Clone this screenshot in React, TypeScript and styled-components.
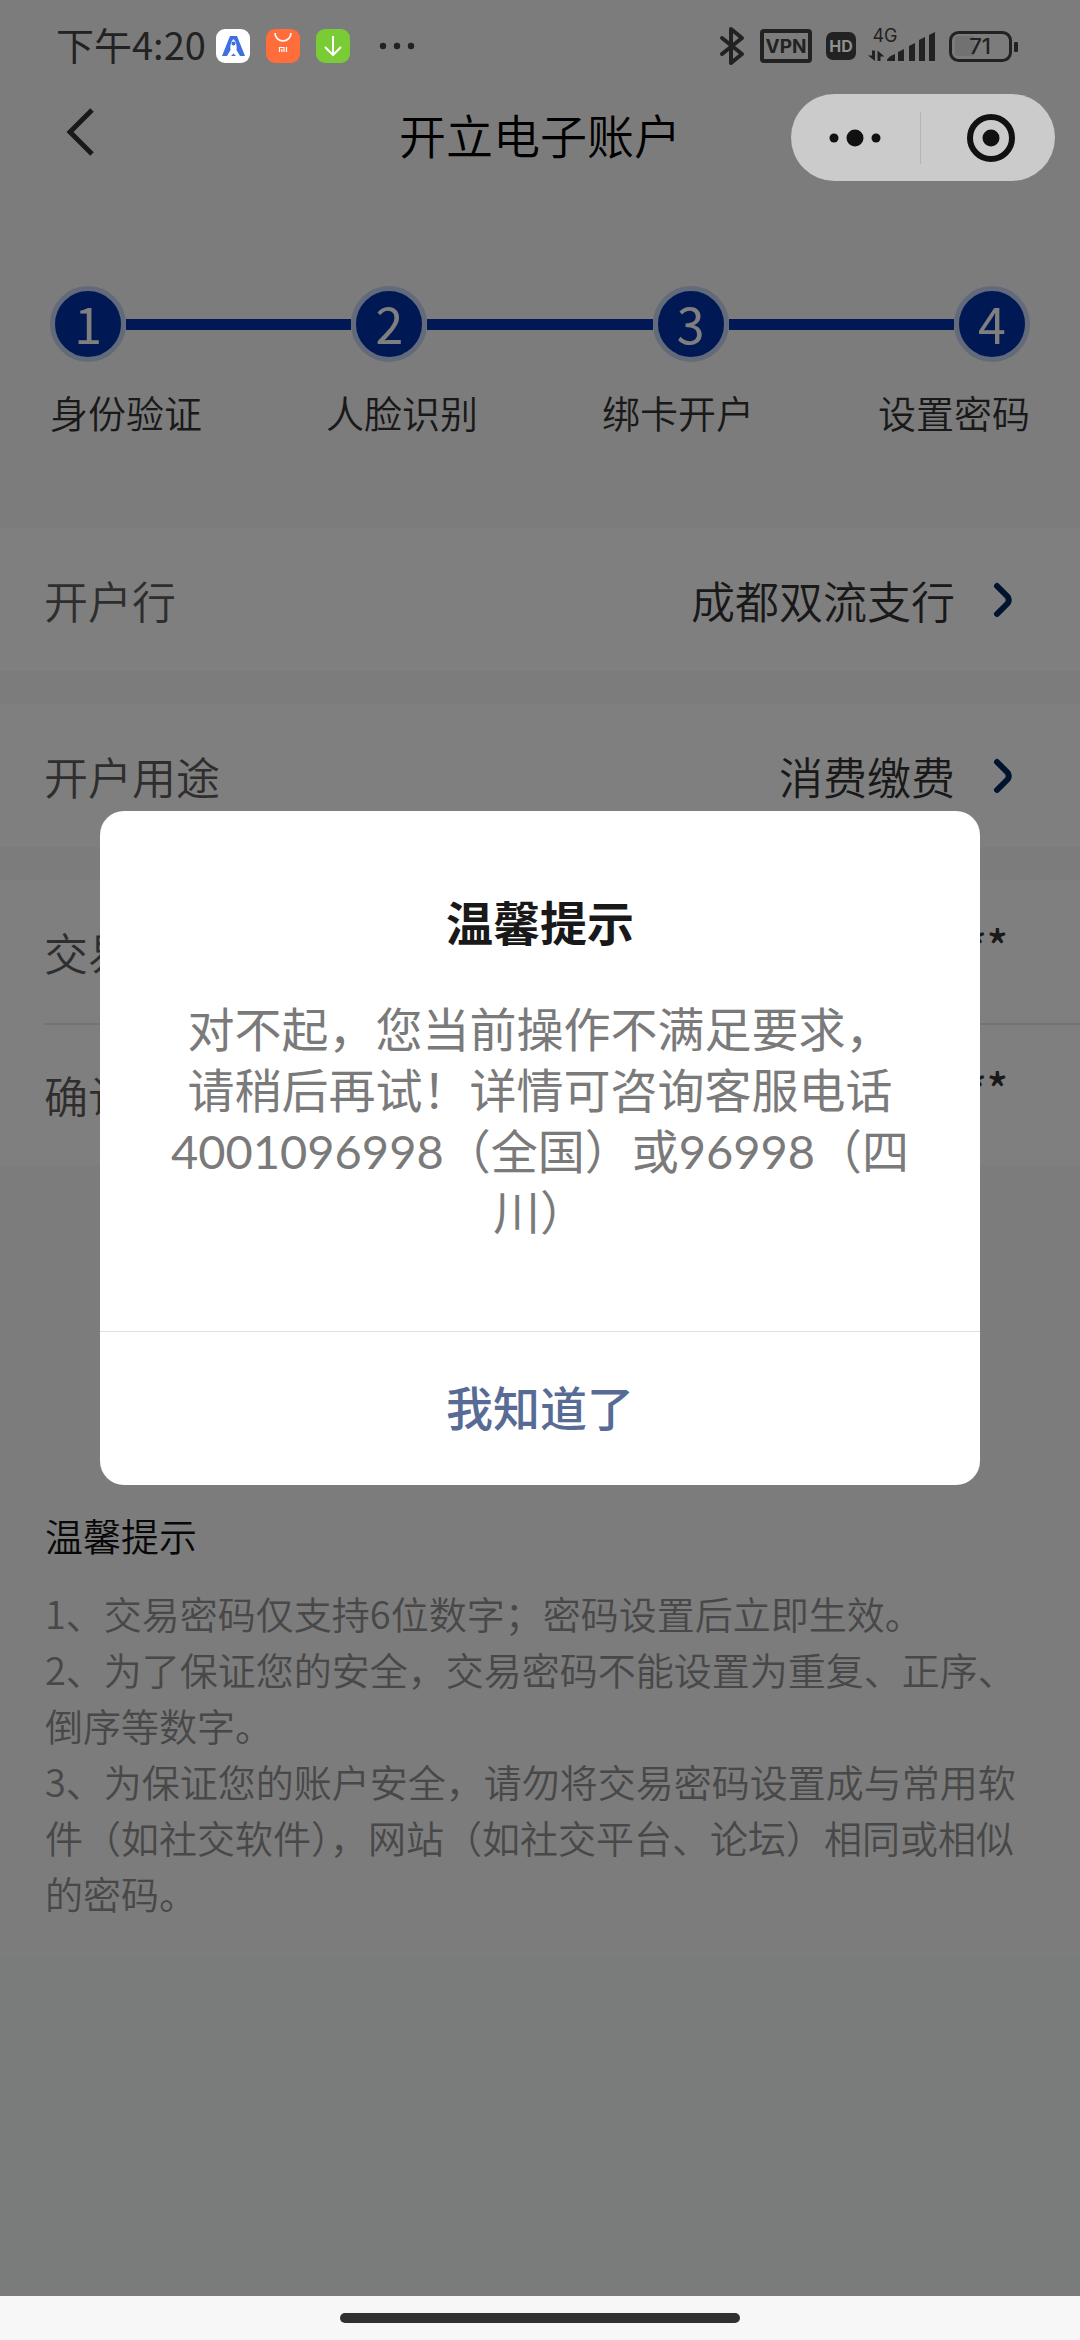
import React from "react";
import styled, { createGlobalStyle } from "styled-components";

const sans = `"Noto Sans CJK SC", "Noto Sans", sans-serif`;

const Global = createGlobalStyle`
  * { box-sizing: border-box; }
  body { margin: 0; font-family: ${sans}; background: #f7f7f7; color: #323233; }
  button, input { font: inherit; color: inherit; border: 0; background: none; padding: 0; margin: 0; outline: none; }
  h1, h2, p { margin: 0; padding: 0; }
`;

const Screen = styled.div`
  position: relative;
  display: flex;
  flex-direction: column;
  min-height: 100vh;
`;

const Page = styled.div`
  position: relative;
  flex: 1;
  background: #f5f8f6;
`;

const Content = styled.main`
  padding-bottom: 36px;
  background: #f8f8f8;
`;

const StatusBar = styled.header`
  position: relative;
  z-index: 2;
  display: flex;
  align-items: center;
  justify-content: space-between;
  height: 92px;
  padding: 0 62px 0 56px;
  color: #222;
`;

const StatusGroup = styled.div`
  display: flex;
  align-items: center;
  gap: 10px;
`;

const Clock = styled.time`
  padding-bottom: 4px;
  font-size: 38px;
  line-height: 48px;
  font-weight: 400;
`;

const NavBar = styled.nav`
  display: grid;
  grid-template-columns: 1fr auto 1fr;
  align-items: start;
  height: 90px;
  padding: 12px 60px 0;
`;

const BackButton = styled.button`
  display: flex;
  justify-self: start;
  height: 56px;
`;

const PageTitle = styled.h1`
  font-size: 47px;
  line-height: 60px;
  font-weight: 350;
  color: #000;
`;

const Capsule = styled.div`
  position: absolute;
  z-index: 2;
  top: 94px;
  right: 25px;
  display: flex;
  align-items: center;
  width: 264px;
  height: 87px;
  border-radius: 44px;
  background: #cbcbcb;
`;

const CapsuleButton = styled.button`
  flex: 1;
  display: flex;
  align-items: center;
  justify-content: center;
  height: 100%;

  &:last-child {
    padding-left: 6px;
  }
`;

const CapsuleDivider = styled.span`
  width: 1px;
  height: 52px;
  background: #b4b4b4;
`;

const Steps = styled.section`
  padding: 104px 50px 88px;
`;

const StepTrack = styled.div`
  display: flex;
  align-items: center;
`;

const StepDot = styled.span`
  display: flex;
  justify-content: center;
  width: 76px;
  height: 76px;
  border: 5px solid #c6d4f5;
  border-radius: 50%;
  background: #0031a8;
  color: #fff;
  font-size: 50px;
  line-height: 62px;
`;

const StepLine = styled.span`
  flex: 1;
  height: 11px;
  background: #0031a8;
`;

const StepLabels = styled.div`
  display: flex;
  justify-content: space-between;
  margin-top: 24px;
  font-size: 38px;
  line-height: 52px;
  padding-bottom: 2px;
  font-weight: 350;
`;

const Group = styled.div`
  margin-bottom: 33px;
  background: #fff;
`;

const rowBox = `
  display: flex;
  align-items: center;
  width: 100%;
  height: 143px;
  padding: 0 66px 0 44px;
  font-size: 44px;
  line-height: 60px;
  font-weight: 350;
`;

const LinkRow = styled.button`
  ${rowBox}
  text-align: left;
`;

const FieldRow = styled.label`
  ${rowBox}
  position: relative;
  padding-right: 72px;
  & + &::before {
    content: "";
    position: absolute;
    top: 0;
    left: 45px;
    right: 0;
    height: 2px;
    background: #e6e6e6;
  }
`;

const RowLabel = styled.span`
  flex: 1;
  color: #5c5c5c;
`;

const RowValue = styled.span`
  margin-right: 37px;
`;

const Password = styled.input`
  width: 300px;
  padding-bottom: 16px;
  font-weight: 500;
  text-align: right;
`;

const Tips = styled.section`
  padding: 0 45px;
  margin-top: 341px;
`;

const TipsTitle = styled.h2`
  font-size: 38px;
  line-height: 56px;
  font-weight: 350;
  color: #111;
`;

const TipsText = styled.p`
  font-size: 38px;
  line-height: 56px;
  font-weight: 350;
  color: #909090;
`;

const TipsBody = styled.div`
  margin-top: 22px;
`;

const Overlay = styled.div`
  position: absolute;
  inset: 0;
  z-index: 1;
  display: flex;
  align-items: center;
  justify-content: center;
  background: rgba(0, 0, 0, 0.5);
`;

const Dialog = styled.div`
  width: calc(100% - 200px);
  border-radius: 24px;
  background: #fff;
  overflow: hidden;
  text-align: center;
`;

const DialogTitle = styled.h2`
  padding-top: 78px;
  font-size: 47px;
  line-height: 64px;
  font-weight: 700;
  color: #191919;
`;

const DialogText = styled.p`
  padding: 46px 66px 88px;
  font-family: Lato, ${sans};
  font-size: 47px;
  line-height: 61px;
  font-weight: 400;
  color: #7a7a7a;
`;

const DialogButton = styled.button`
  width: 100%;
  height: 154px;
  padding-bottom: 5px;
  border-top: 1px solid #e0e0e0;
  font-size: 47px;
  line-height: 64px;
  font-weight: 500;
  color: #576b95;
`;

const HomeBar = styled.footer`
  display: flex;
  justify-content: center;
  height: 44px;
  padding-top: 17px;
  background: #f7f7f7;
`;

const HomePill = styled.span`
  width: 400px;
  height: 10px;
  border-radius: 5px;
  background: #303030;
`;

const Chevron = () => (
  <svg width="22" height="36" viewBox="0 0 22 36" fill="none">
    <path d="M5 4L15.500 14.500Q18 18 15.500 21.500L5 32" stroke="#00285f" strokeWidth="6" strokeLinecap="round" strokeLinejoin="round" />
  </svg>
);

const AppIcons = () => (
  <svg width="200" height="36" viewBox="0 0 200 36">
    <rect x="0" y="1" width="34" height="34" rx="9" fill="#fff" />
    <path d="M14 8h7l8 20H6z" fill="#3f6fe0" />
    <path d="M17.500 11c3 3 3.500 7 3 11l3.500 6h-4l-2.500-2.500L15 28h-4l3.500-6c-.5-4 0-8 3-11z" fill="#fff" />
    <circle cx="17.500" cy="15.500" r="2" fill="#3f6fe0" />
    <rect x="50" y="1" width="34" height="34" rx="9" fill="#ff6d3a" />
    <path d="M59 5a8 8 0 0 0 16 0" fill="none" stroke="#fff" strokeWidth="1.700" />
    <path d="M63.500 24v-4.500h4.500V24M65.800 21v3M70.500 19v5" fill="none" stroke="#fff" strokeWidth="1.200" />
    <rect x="100" y="1" width="34" height="34" rx="9" fill="#79cc36" />
    <path d="M117 8v18M109 19l8 8 8-8" fill="none" stroke="#fff" strokeWidth="2" />
    <g fill="#222">
      <circle cx="167" cy="18" r="3.200" />
      <circle cx="181" cy="18" r="3.200" />
      <circle cx="195" cy="18" r="3.200" />
    </g>
  </svg>
);

const SystemIcons = () => (
  <svg width="300" height="40" viewBox="0 0 300 40" fill="none" stroke="#222" fontFamily="Inter, sans-serif">
    <path d="M4 12l20 16-11 9V3l11 9L4 28" strokeWidth="4" strokeLinejoin="round" strokeLinecap="round" />
    <rect x="44" y="5" width="48" height="30" rx="2" strokeWidth="4" />
    <text x="68" y="27" fontSize="19" fontWeight="700" textAnchor="middle" fill="#222" stroke="none">VPN</text>
    <rect x="108" y="6" width="30" height="28" rx="7" fill="#222" stroke="none" />
    <text x="123" y="26" fontSize="16" fontWeight="700" textAnchor="middle" fill="#909090" stroke="none">HD</text>
    <text x="167" y="16" fontSize="18" textAnchor="middle" fill="#222" stroke="none">4G</text>
    <g fill="#222" stroke="none">
      <path d="M154 24.500h3V35l-7-5.500h4zM159.500 35V24.500l7 6h-4V35z" />
      <path d="M169 35v-1q2-4 8-6v7z" />
      <path d="M180 35V26l6-3v12z" />
      <path d="M191 35V20l6-3v18z" />
      <path d="M201 35V14l6-3v24z" />
      <path d="M211 35V9l6-3v29z" />
      <rect x="237" y="10" width="20" height="20" rx="3" fill="#717171" />
      <rect x="296" y="16" width="4" height="10" rx="1" />
    </g>
    <rect x="232.500" y="6.500" width="60" height="28" rx="8" strokeWidth="3" />
    <text x="262" y="28" fontSize="22" fontWeight="500" textAnchor="middle" fill="#222" stroke="none">71</text>
  </svg>
);

const steps = ["身份验证", "人脸识别", "绑卡开户", "设置密码"];

const tips = [
  "1、交易密码仅支持6位数字；密码设置后立即生效。",
  "2、为了保证您的安全，交易密码不能设置为重复、正序、倒序等数字。",
  "3、为保证您的账户安全，请勿将交易密码设置成与常用软件（如社交软件），网站（如社交平台、论坛）相同或相似的密码。",
];

export default function App() {
  return (
    <Screen>
      <Global />
      <Page>
        <Content>
          <StatusBar>
            <StatusGroup>
              <Clock>下午4:20</Clock>
              <AppIcons />
            </StatusGroup>
            <SystemIcons />
          </StatusBar>
          <NavBar>
            <BackButton aria-label="返回">
              <svg width="40" height="56" viewBox="0 0 40 56" fill="none">
                <path d="M32 6L10 28l22 22" stroke="#333" strokeWidth="5" />
              </svg>
            </BackButton>
            <PageTitle>开立电子账户</PageTitle>
          </NavBar>
          <Capsule>
            <CapsuleButton aria-label="更多">
              <svg width="54" height="20" viewBox="0 0 54 20" fill="#111">
                <circle cx="6" cy="10" r="4.500" />
                <circle cx="27" cy="10" r="8.500" />
                <circle cx="48" cy="10" r="4.500" />
              </svg>
            </CapsuleButton>
            <CapsuleDivider />
            <CapsuleButton aria-label="关闭">
              <svg width="50" height="50" viewBox="0 0 50 50">
                <circle cx="25" cy="25" r="21" fill="none" stroke="#111" strokeWidth="6" />
                <circle cx="25" cy="25" r="8.500" fill="#111" />
              </svg>
            </CapsuleButton>
          </Capsule>
          <Steps>
            <StepTrack>
              {steps.map((s, i) => (
                <React.Fragment key={s}>
                  {i > 0 && <StepLine />}
                  <StepDot>{i + 1}</StepDot>
                </React.Fragment>
              ))}
            </StepTrack>
            <StepLabels>
              {steps.map((s) => (
                <span key={s}>{s}</span>
              ))}
            </StepLabels>
          </Steps>
          <Group>
            <LinkRow>
              <RowLabel>开户行</RowLabel>
              <RowValue>成都双流支行</RowValue>
              <Chevron />
            </LinkRow>
          </Group>
          <Group>
            <LinkRow>
              <RowLabel>开户用途</RowLabel>
              <RowValue>消费缴费</RowValue>
              <Chevron />
            </LinkRow>
          </Group>
          <Group>
            <FieldRow>
              <RowLabel>交易密码</RowLabel>
              <Password defaultValue="******" />
            </FieldRow>
            <FieldRow>
              <RowLabel>确认密码</RowLabel>
              <Password defaultValue="******" />
            </FieldRow>
          </Group>
          <Tips>
            <TipsTitle>温馨提示</TipsTitle>
            <TipsBody>
              {tips.map((t) => (
                <TipsText key={t}>{t}</TipsText>
              ))}
            </TipsBody>
          </Tips>
        </Content>
        <Overlay>
          <Dialog role="dialog" aria-modal="true" aria-labelledby="dialog-title">
            <DialogTitle id="dialog-title">温馨提示</DialogTitle>
            <DialogText>
              对不起，您当前操作不满足要求，请稍后再试！详情可咨询客服电话4001096998（全国）或96998（四川）
            </DialogText>
            <DialogButton>我知道了</DialogButton>
          </Dialog>
        </Overlay>
      </Page>
      <HomeBar>
        <HomePill />
      </HomeBar>
    </Screen>
  );
}
